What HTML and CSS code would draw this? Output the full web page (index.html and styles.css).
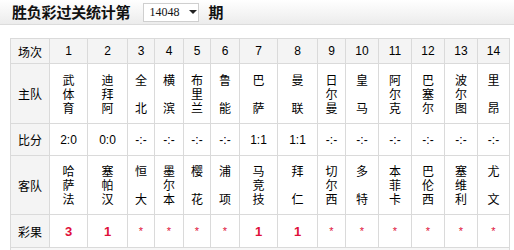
FILE: index.html
```html
<!DOCTYPE html>
<html>
<head>
<meta charset="utf-8">
<link rel="stylesheet" href="styles.css">
</head>
<body>
<div class="titlebar">
  <span class="title">胜负彩过关统计第</span>
  <span class="sel"><span class="sel-val">14048</span><span class="arrow"></span></span>
  <span class="title qi">期</span>
</div>
<table class="grid">
  <colgroup>
    <col style="width:39px"><col style="width:38px"><col style="width:40px"><col style="width:27px"><col style="width:29px"><col style="width:27px"><col style="width:29px"><col style="width:38px"><col style="width:40px"><col style="width:28px"><col style="width:33px"><col style="width:33px"><col style="width:33px"><col style="width:33px"><col style="width:32px">
  </colgroup>
  <tr class="r-head">
    <th class="lab">场次</th>
    <td>1</td><td>2</td><td>3</td><td>4</td><td>5</td><td>6</td><td>7</td><td>8</td><td>9</td><td>10</td><td>11</td><td>12</td><td>13</td><td>14</td>
  </tr>
  <tr class="r-team">
    <th class="lab">主队</th>
    <td>武<br>体<br>育</td><td>迪<br>拜<br>阿</td><td>全<br>&nbsp;<br>北</td><td>横<br>&nbsp;<br>滨</td><td>布<br>里<br>兰</td><td>鲁<br>&nbsp;<br>能</td><td>巴<br>&nbsp;<br>萨</td><td>曼<br>&nbsp;<br>联</td><td>日<br>尔<br>曼</td><td>皇<br>&nbsp;<br>马</td><td>阿<br>尔<br>克</td><td>巴<br>塞<br>尔</td><td>波<br>尔<br>图</td><td>里<br>&nbsp;<br>昂</td>
  </tr>
  <tr class="r-score">
    <th class="lab">比分</th>
    <td>2:0</td><td>0:0</td><td>-:-</td><td>-:-</td><td>-:-</td><td>-:-</td><td>1:1</td><td>1:1</td><td>-:-</td><td>-:-</td><td>-:-</td><td>-:-</td><td>-:-</td><td>-:-</td>
  </tr>
  <tr class="r-team r-away">
    <th class="lab">客队</th>
    <td>哈<br>萨<br>法</td><td>塞<br>帕<br>汉</td><td>恒<br>&nbsp;<br>大</td><td>墨<br>尔<br>本</td><td>樱<br>&nbsp;<br>花</td><td>浦<br>&nbsp;<br>项</td><td>马<br>竞<br>技</td><td>拜<br>&nbsp;<br>仁</td><td>切<br>尔<br>西</td><td>多<br>&nbsp;<br>特</td><td>本<br>菲<br>卡</td><td>巴<br>伦<br>西</td><td>塞<br>维<br>利</td><td>尤<br>&nbsp;<br>文</td>
  </tr>
  <tr class="r-res">
    <th class="lab">彩果</th>
    <td class="num">3</td><td class="num">1</td><td>*</td><td>*</td><td>*</td><td>*</td><td class="num">1</td><td class="num">1</td><td>*</td><td>*</td><td>*</td><td>*</td><td>*</td><td>*</td>
  </tr>
  <tr class="r-more">
    <td colspan="15"></td>
  </tr>
</table>
</body>
</html>
```
FILE: styles.css
```css
html, body {
  margin: 0;
  padding: 0;
  background: #fff;
}
body {
  width: 514px;
  height: 250px;
  overflow: hidden;
  font-family: "Liberation Sans", "Noto Sans CJK SC", sans-serif;
  font-size: 12px;
  color: #000;
}
.titlebar {
  height: 24px;
  border-bottom: 1px solid #dcdcdc;
  background: linear-gradient(#ffffff, #ececec);
  display: flex;
  align-items: center;
  padding-left: 12px;
}
.title {
  font-family: "Noto Sans CJK SC", sans-serif;
  font-weight: bold;
  font-size: 15px;
  line-height: 18px;
  color: #111;
  letter-spacing: -0.2px;
}
.sel {
  margin-left: 13px;
  width: 54px;
  height: 17px;
  border: 1px solid #cfcfcf;
  background: #fff;
  display: flex;
  align-items: center;
  box-sizing: content-box;
}
.sel-val {
  font-family: "Liberation Serif", "DejaVu Serif", serif;
  font-size: 12px;
  padding-left: 5px;
  color: #111;
}
.arrow {
  margin-left: 10px;
  width: 0;
  height: 0;
  border-left: 4px solid transparent;
  border-right: 4px solid transparent;
  border-top: 4px solid #222;
}
.qi {
  margin-left: 9px;
}
.grid {
  margin: 13px 0 0 10px;
  border-collapse: collapse;
  table-layout: fixed;
  width: 500px;
}
.grid th, .grid td {
  border: 1px solid #dadada;
  text-align: center;
  vertical-align: middle;
  padding: 0;
  font-weight: normal;
}
.grid .lab {
  background: #f4f4f4;
  font-family: "Noto Sans CJK SC", sans-serif;
  font-size: 12px;
}
.r-head td {
  background: #f4f4f4;
  font-size: 12px;
}
.r-head { height: 25px; }
.r-team { height: 60px; }
.r-away { height: 59px; }
.r-team td {
  font-family: "Noto Sans CJK SC", sans-serif;
  font-size: 12px;
  line-height: 14px;
}
.r-score { height: 32px; }
.r-score td { font-size: 12px; }
.r-res { height: 33px; }
.r-res td {
  color: #e0103a;
  font-size: 11px;
}
.r-res td.num {
  font-weight: bold;
  font-size: 13px;
}
.r-more { height: 20px; }
.r-more td { background: #f7f7f7; }
```
